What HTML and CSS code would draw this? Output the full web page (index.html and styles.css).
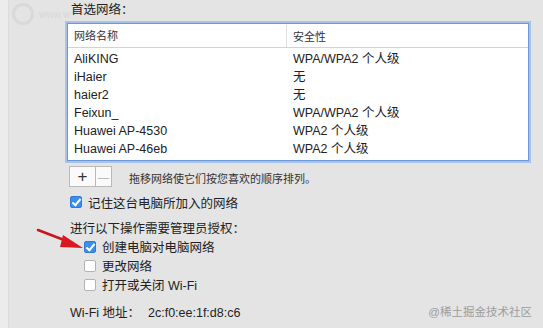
FILE: index.html
```html
<!DOCTYPE html>
<html lang="zh-CN">
<head>
  <meta charset="UTF-8" />
  <title>网络偏好设置</title>
  <link rel="stylesheet" href="styles.css">
</head>
<body>

  <div class="window">

    <!-- faint site watermark in the corner -->
    <div class="wm-top">
      <span class="wm-logo"></span>
      <span class="wm-text">www.w</span>
    </div>

    <div class="pane">
      <div class="label">首选网络：</div>

      <div class="net-table">
        <div class="net-head">
          <div class="col-name">网络名称</div>
          <div class="col-sec">安全性</div>
        </div>
        <div class="net-rows">
          <div class="net-row"><div class="col-name">AliKING</div><div class="col-sec">WPA/WPA2 个人级</div></div>
          <div class="net-row"><div class="col-name">iHaier</div><div class="col-sec">无</div></div>
          <div class="net-row"><div class="col-name">haier2</div><div class="col-sec">无</div></div>
          <div class="net-row"><div class="col-name">Feixun_</div><div class="col-sec">WPA/WPA2 个人级</div></div>
          <div class="net-row"><div class="col-name">Huawei AP-4530</div><div class="col-sec">WPA2 个人级</div></div>
          <div class="net-row"><div class="col-name">Huawei AP-46eb</div><div class="col-sec">WPA2 个人级</div></div>
        </div>
      </div>

      <div class="tools">
        <div class="seg">
          <button class="seg-add">+</button>
          <button class="seg-del">—</button>
        </div>
        <span class="hint">拖移网络使它们按您喜欢的顺序排列。</span>
      </div>

      <label class="check remember"><span class="box on"></span>记住这台电脑所加入的网络</label>

      <div class="admin">进行以下操作需要管理员授权：</div>

      <div class="admin-list">
        <label class="check"><span class="box on"></span>创建电脑对电脑网络</label>
        <label class="check"><span class="box"></span>更改网络</label>
        <label class="check"><span class="box"></span>打开或关闭 Wi-Fi</label>
      </div>

      <div class="addr">
        <span class="addr-label">Wi-Fi 地址：</span>
        <span class="addr-value">2c:f0:ee:1f:d8:c6</span>
      </div>
    </div>

    <!-- red annotation arrow pointing at the first admin option -->
    <svg class="arrow" width="50" height="26" viewBox="0 0 50 26">
      <path d="M2 2 L32 13.5" stroke="#c8161c" stroke-width="2.6" stroke-linecap="round" fill="none"/>
      <path d="M27 7 L47 20 L24 19 Z" fill="#d9191f"/>
    </svg>

    <div class="wm-bottom">@稀土掘金技术社区</div>
  </div>

</body>
</html>
```

FILE: styles.css
```css
* {
  box-sizing: border-box;
}

body {
  margin: 0;
  background-color: #ececec;
  font-family: 'Liberation Sans', 'Noto Sans CJK SC', sans-serif;
  color: #222;
}

.window {
  position: relative;
  margin-left: 8px;
  width: 535px;
  height: 328px;
  background-color: #e4e4e4;
  border-left: 1px solid #dcdcdc;
  overflow: hidden;
}

.wm-top {
  position: absolute;
  left: 3px;
  top: 3px;
  display: flex;
  align-items: center;
  gap: 5px;
  opacity: 0.5;
}

.wm-logo {
  width: 22px;
  height: 22px;
  border-radius: 50%;
  border: 3px solid #cfcfcf;
}

.wm-text {
  font-size: 10px;
  color: #cfcfcf;
}

.pane {
  padding: 2px 0 0 61px;
  font-size: 12.5px;
}

.label {
  height: 19px;
  line-height: 16px;
  padding-left: 1px;
}

.net-table {
  width: 462px;
  height: 138px;
  background-color: #fff;
  border: 1px solid #6b98d9;
  box-shadow: 0 0 0 2px #a7c3ea;
  margin-left: -3px;
  margin-top: 2px;
}

.net-head {
  display: flex;
  height: 24px;
  align-items: center;
  border-bottom: 1px solid #d2d2d2;
  font-size: 11px;
  color: #333;
}

.net-head .col-name {
  border-right: 1px solid #dedede;
  height: 22px;
  line-height: 22px;
}

.col-name {
  width: 219px;
  padding-left: 6px;
}

.col-sec {
  padding-left: 6px;
}

.net-rows {
  padding-top: 2px;
}

.net-row {
  display: flex;
  height: 18px;
  line-height: 18px;
  font-size: 12.5px;
  color: #222;
}

.tools {
  display: flex;
  align-items: center;
  gap: 17px;
  margin-top: 5px;
  margin-left: -1px;
}

.seg {
  display: flex;
}

.seg button {
  height: 21px;
  margin: 0;
  padding: 0;
  background: #fafafa;
  border: 1px solid #b9b9b9;
  font-family: 'Liberation Sans', sans-serif;
  color: #333;
  cursor: pointer;
}

.seg-add {
  width: 27px;
  font-size: 17px;
  line-height: 17px;
}

.seg-del {
  width: 16px;
  border-left: none !important;
  font-size: 11px;
  color: #aaa !important;
}

.hint {
  font-size: 11px;
  color: #333;
  padding-top: 3px;
}

.check {
  display: flex;
  align-items: center;
  gap: 6px;
  height: 20px;
}

.remember {
  margin-top: 5px;
}

.box {
  width: 12px;
  height: 12px;
  border: 1px solid #b3b3b3;
  border-radius: 2px;
  background: #fff;
  position: relative;
}

.box.on {
  background: #3b8df0;
  border-color: #2f7ad8;
}

.box.on::after {
  content: "";
  position: absolute;
  left: 3px;
  top: 0px;
  width: 3px;
  height: 7px;
  border: solid #fff;
  border-width: 0 2px 2px 0;
  transform: rotate(40deg);
}

.admin {
  margin-top: 7px;
  height: 20px;
  line-height: 20px;
}

.admin-list {
  padding-left: 14px;
  margin-top: -2px;
}

.admin-list .check {
  height: 19px;
}

.addr {
  display: flex;
  margin-top: 9px;
  height: 20px;
  line-height: 20px;
}

.addr-label {
  width: 78px;
}

.arrow {
  position: absolute;
  left: 27px;
  top: 228px;
}

.wm-bottom {
  position: absolute;
  right: 11px;
  bottom: 9px;
  font-size: 11.5px;
  color: #9d9d9d;
}
```
